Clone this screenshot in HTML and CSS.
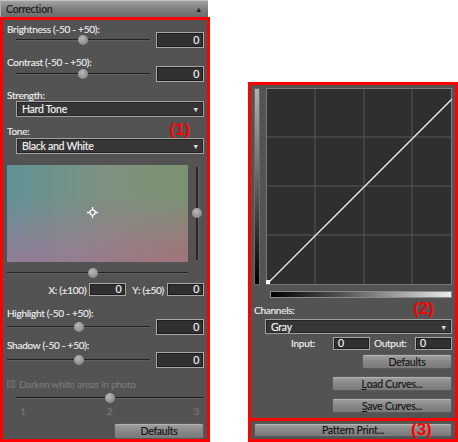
FILE: index.html
```html
<!DOCTYPE html>
<html>
<head>
<meta charset="utf-8">
<link rel="stylesheet" href="styles.css">
</head>
<body>
<div class="page">
  <section class="left">
    <div class="hdr"><span>Correction</span><span class="tri">&#9650;</span></div>
    <div class="box box1">
      <div class="lbl l-bright">Brightness (-50 - +50):</div>
      <div class="srow r-bright">
        <div class="slider s-short"><div class="track"></div><div class="thumb" style="left:50%"></div></div>
        <div class="num">0</div>
      </div>
      <div class="lbl l-contrast">Contrast (-50 - +50):</div>
      <div class="srow r-contrast">
        <div class="slider s-short"><div class="track"></div><div class="thumb" style="left:50%"></div></div>
        <div class="num">0</div>
      </div>
      <div class="lbl l-strength">Strength:</div>
      <div class="select sel-strength"><span>Hard Tone</span><span class="arr">&#9660;</span></div>
      <div class="lblrow l-tone"><span class="lbl">Tone:</span><span class="tag tag1">(1)</span></div>
      <div class="select sel-tone"><span>Black and White</span><span class="arr">&#9660;</span></div>
      <div class="tonearea">
        <div class="grad">
          <svg class="cross" width="11" height="11" viewBox="0 0 11 11"><circle cx="5.5" cy="5.5" r="2.6" fill="none" stroke="#fff" stroke-width="1.3"/><path d="M5.5 0v2.6M5.5 8.4V11M0 5.5h2.6M8.4 5.5H11" stroke="#fff" stroke-width="1.3"/></svg>
        </div>
        <div class="vslider"><div class="vtrack"></div><div class="vthumb"></div></div>
      </div>
      <div class="slider s-hue"><div class="track"></div><div class="thumb" style="left:47.5%"></div></div>
      <div class="xyrow">
        <span class="xlab">X: (&plusmn;100)</span><div class="num small nx">0</div>
        <span class="ylab">Y: (&plusmn;50)</span><div class="num small ny">0</div>
      </div>
      <div class="lbl l-high">Highlight (-50 - +50):</div>
      <div class="srow r-high">
        <div class="slider s-long"><div class="track"></div><div class="thumb" style="left:50%"></div></div>
        <div class="num">0</div>
      </div>
      <div class="lbl l-shadow">Shadow (-50 - +50):</div>
      <div class="srow r-shadow">
        <div class="slider s-long"><div class="track"></div><div class="thumb" style="left:50%"></div></div>
        <div class="num">0</div>
      </div>
      <div class="chk"><span class="cbox"></span><span>Darken white areas in photo</span></div>
      <div class="slider s-dark"><div class="track"></div><div class="thumb" style="left:50%"></div></div>
      <div class="ticks"><span>1</span><span>2</span><span>3</span></div>
      <div class="btnrow"><div class="btn b-def1">Defaults</div></div>
    </div>
  </section>
  <section class="right">
    <div class="box box2">
      <div class="graphrow">
        <div class="vgrad"></div>
        <svg class="graph" width="186" height="197" viewBox="0 0 186 197">
          <rect x="0" y="0" width="186" height="197" fill="#2f2f2f"/>
          <path d="M49 0V197M98 0V197M146 0V197M0 49H186M0 98H186M0 147H186" stroke="#595959" stroke-width="1"/>
          <rect x="0.5" y="0.5" width="185" height="196" fill="none" stroke="#7a7a7a"/>
          <path d="M2 195L196 1" stroke="#e8e8e8" stroke-width="1.3"/>
          <rect x="0" y="192" width="4" height="4" fill="#fff"/>
        </svg>
      </div>
      <div class="hgrad"></div>
      <div class="lblrow l-chan"><span class="lbl">Channels:</span><span class="tag tag2">(2)</span></div>
      <div class="select sel-gray"><span>Gray</span><span class="arr">&#9660;</span></div>
      <div class="iorow">
        <span class="inl">Input:</span><div class="num small left nin">0</div>
        <span class="outl">Output:</span><div class="num small left nout">0</div>
      </div>
      <div class="btnrow"><div class="btn b-def2">Defaults</div></div>
      <div class="btnrow"><div class="btn b-load"><u>L</u>oad Curves...</div></div>
      <div class="btnrow"><div class="btn b-save"><u>S</u>ave Curves...</div></div>
    </div>
    <div class="box box3">
      <div class="btn b-pat">Pattern Print...</div>
      <span class="tag tag3">(3)</span>
    </div>
  </section>
</div>
</body>
</html>
```
FILE: styles.css
```css
* { box-sizing: border-box; }
html, body { margin: 0; padding: 0; background: #fff; }
body { font-family: Lato, "Liberation Sans", sans-serif; font-size: 10px; letter-spacing: -0.25px; color: #ececec;
  -webkit-text-stroke: 0.15px currentColor; }
.page { display: flex; align-items: flex-start; width: 458px; height: 442px; overflow: hidden; }
.left { width: 210px; flex: none; }
.right { width: 210px; flex: none; margin-left: 38px; margin-top: 82px; }

.hdr { height: 17px; display: flex; align-items: center; justify-content: space-between;
  padding: 0 6px 0 5px; color: #1e1e1e; font-size: 10.5px;
  background: linear-gradient(#a2a2a2, #7e7e7e 50%, #6c6c6c);
  border-top: 1px solid #c4c4c4; border-left: 1px solid #acacac; margin-right: 2px; }
.tri { font-size: 7px; color: #222; }

.box { border: 3px solid #f00; background: #535353; }
.box1 { height: 425px; padding: 0 3px 0 4px; }
.box2 { height: 339px; padding: 0 3px 0 3px; }
.box3 { height: 21px; border-top: none; padding: 2px 3px 0 3px; position: relative; }

.lbl { height: 12px; line-height: 12px; white-space: nowrap; }
.lblrow { display: flex; justify-content: space-between; align-items: center; height: 12px; }
.tag { color: #f00; font-family: "Liberation Sans", Arial, sans-serif; font-weight: bold; font-size: 17px; line-height: 17px; letter-spacing: 0; -webkit-text-stroke: 0; }

.srow { display: flex; align-items: center; justify-content: space-between; height: 16px; }
.num { width: 48px; height: 16px; border: 1px solid #a8a8a8; background: #303030; box-shadow: inset 0 0 0 1px #1e1e1e;
  text-align: right; padding-right: 4px; font-size: 10.5px; line-height: 14px; color: #f4f4f4; }
.num.small { height: 13px; line-height: 11px; width: 37px; }
.num.left { text-align: left; padding-left: 4px; }

.slider { position: relative; height: 10px; }
.track { position: absolute; left: 0; right: 0; top: 4px; height: 2px; background: #222; border-bottom: 1px solid #606060; }
.thumb { position: absolute; top: 0; width: 10px; height: 10px; margin-left: -5px; border-radius: 50%;
  background: radial-gradient(circle at 40% 35%, #b8b8b8, #8c8c8c 70%, #6e6e6e); }
.s-short { width: 134px; margin-left: 9px; }
.s-long { width: 143px; }

.l-bright { margin-top: 3px; }
.r-bright { margin-top: -3px; }
.l-contrast { margin-top: 8px; }
.r-contrast { margin-top: -2px; }
.l-strength { margin-top: 7px; }

.select { height: 16px; margin-left: 9px; display: flex; justify-content: space-between; align-items: center;
  border: 1px solid #a0a0a0; background: #363636; box-shadow: inset 0 0 0 1px #262626; padding: 0 4px 0 5px;
  color: #f2f2f2; font-size: 10.5px; }
.arr { font-size: 7px; color: #ddd; }
.sel-strength { margin-top: 0; }
.l-tone { margin-top: 8px; padding-right: 14px; }
.tag1 { margin-top: -4px; }
.sel-tone { margin-top: 1px; }

.tonearea { display: flex; margin-top: 11px; height: 97px; }
.grad { width: 181px; height: 97px; position: relative;
  background:
    linear-gradient(to bottom, rgba(0,0,0,0) 0%, rgba(0,0,0,0) 30%, rgba(160,118,150,0.78) 100%),
    linear-gradient(to right, #5f9296 0%, #7f917f 55%, #7a9270 100%);
  }
.grad::after { content: ""; position: absolute; inset: 0;
  background: linear-gradient(to right, rgba(140,112,160,0) 0%, rgba(140,112,160,0) 40%, rgba(170,110,100,0.55) 100%);
  mask-image: linear-gradient(to bottom, transparent 40%, #000 100%); -webkit-mask-image: linear-gradient(to bottom, transparent 40%, #000 100%); }
.cross { position: absolute; left: 80px; top: 42px; z-index: 1; }
.vslider { position: relative; width: 11px; margin-left: 4px; height: 97px; }
.vtrack { position: absolute; top: 2px; bottom: 2px; left: 4px; width: 3px; background: #262626; border-right: 1px solid #606060; }
.vthumb { position: absolute; left: 0; top: 43px; width: 10px; height: 10px; border-radius: 50%;
  background: radial-gradient(circle at 40% 35%, #b8b8b8, #8c8c8c 70%, #6e6e6e); }

.s-hue { width: 181px; margin-top: 6px; }
.xyrow { display: flex; align-items: center; justify-content: flex-end; height: 13px; margin-top: 5px; white-space: nowrap; }
.xlab { margin-right: 3px; }
.nx { margin-right: 6px; }
.ylab { margin-right: 3px; }
.ny { width: 36px; }

.l-high { margin-top: 11px; }
.r-high { margin-top: 0; }
.l-shadow { margin-top: 4px; }
.r-shadow { margin-top: 1px; }

.chk { display: flex; align-items: center; height: 12px; margin-top: 10px; color: #7a7a7a; white-space: nowrap; }
.cbox { width: 8px; height: 8px; border: 1px solid #6c6c6c; background: #5e5e5e; margin-right: 4px; }
.s-dark { width: 188px; margin-left: 9px; margin-top: 3px; }
.ticks { display: flex; justify-content: space-between; padding: 0 5px 0 13px; color: #777; height: 12px; margin-top: 2px; }

.btnrow { display: flex; justify-content: flex-end; }
.btn { height: 15px; display: flex; align-items: center; justify-content: center; color: #151515; font-size: 10.5px; white-space: nowrap;
  border: 1px solid #5a5a5a; border-radius: 2px; background: linear-gradient(#a0a0a0, #8a8a8a 45%, #7a7a7a); box-shadow: inset 0 1px 0 #b4b4b4; }
.btn u { text-decoration-thickness: 1px; text-underline-offset: 1px; }
.b-def1 { width: 90px; margin-top: 6px; height: 16px; }

.graphrow { display: flex; margin-top: 3px; }
.vgrad { width: 6px; height: 197px; margin-right: 6px; border: 1px solid #6a6a6a;
  background: linear-gradient(#b0b0b0, #707070 40%, #1a1a1a 85%, #000); }
.graph { display: block; }
.hgrad { margin: 6px 0 0 16px; height: 7px; border: 1px solid #8a8a8a; background: linear-gradient(to right, #000, #555 40%, #ddd 95%, #eee); }
.l-chan { margin-top: 6px; padding-right: 18px; }
.tag2 { margin-top: -4px; }
.sel-gray { margin-left: 11px; margin-top: 3px; height: 15px; }
.iorow { display: flex; align-items: center; height: 12px; margin-top: 3px; white-space: nowrap; }
.inl { margin-left: 37px; width: 44px; }
.nin { width: 36px; }
.outl { margin-left: 4px; width: 43px; }
.nout { width: 37px; }
.b-def2 { width: 90px; margin-top: 5px; }
.b-load { width: 120px; margin-top: 7px; }
.b-save { width: 120px; margin-top: 7px; }
.b-pat { width: 198px; height: 14px; }
.tag3 { position: absolute; left: 160px; top: 0px; }
```
